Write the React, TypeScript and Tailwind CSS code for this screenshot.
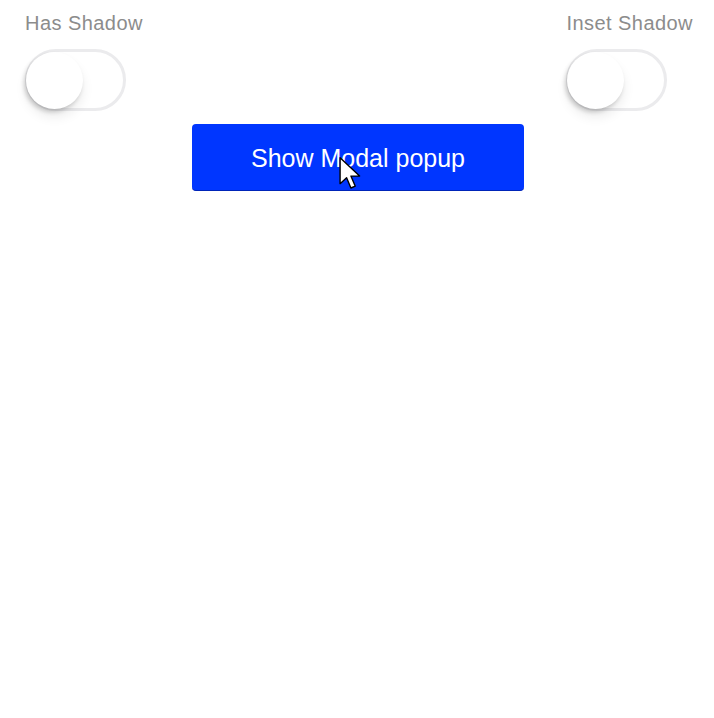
import React from "react";

function Toggle() {
  return (
    <div className="relative w-[101px] h-[62px] rounded-full border-[3px] border-[#ebebed] bg-white">
      <div className="absolute left-[-2px] top-[0px] w-[57px] h-[57px] rounded-full bg-white shadow-[-2px_3px_4px_rgba(0,0,0,0.18),0_8px_12px_rgba(0,0,0,0.08)]" />
    </div>
  );
}

function Group({ label }: { label: string }) {
  return (
    <div className="flex flex-col items-start">
      <div className="text-[20px] leading-[24px] tracking-[0.45px] text-[#8c8c8c] font-['Liberation_Sans',Arial,sans-serif]">
        {label}
      </div>
      <div className="mt-[14px]">
        <Toggle />
      </div>
    </div>
  );
}

export default function App() {
  return (
    <div className="w-[714px] h-[718px] bg-white font-['Liberation_Sans',Arial,sans-serif]">
      <div className="flex justify-between pl-[25px] pr-[21px] pt-[11px]">
        <Group label="Has Shadow" />
        <Group label="Inset Shadow" />
      </div>
      <div className="flex justify-center mt-[13px] pl-[2px]">
        <button className="relative w-[332px] h-[67px] rounded-[4px] bg-[#0036ff] border-b border-[#0024b8] text-white text-[25px] leading-[30px] pt-[2px]">
          Show Modal popup
          <svg
            className="absolute left-[147px] top-[32px]"
            width="26"
            height="38"
            viewBox="0 0 24 34"
          >
            <path
              d="M1 1 L1 25 L7 19.5 L11 29 L15 27.3 L11 18 L19 18 Z"
              fill="white"
              stroke="black"
              strokeWidth="1.3"
              strokeLinejoin="round"
            />
          </svg>
        </button>
      </div>
    </div>
  );
}
